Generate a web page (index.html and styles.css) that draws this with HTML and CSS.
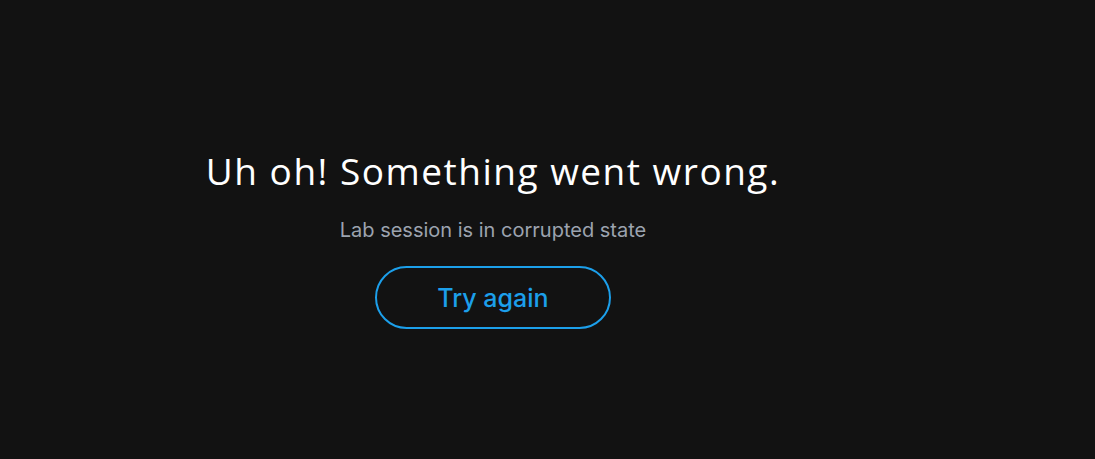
FILE: index.html
```html
<!DOCTYPE html>
<html lang="en">
<head>
<meta charset="utf-8">
<title>Error</title>
<link rel="stylesheet" href="styles.css">
</head>
<body>
<main class="page">
  <section class="error">
    <h1 class="error-title">Uh oh! Something went wrong.</h1>
    <p class="error-message">Lab session is in corrupted state</p>
    <button class="error-button" type="button">Try again</button>
  </section>
</main>
</body>
</html>
```

FILE: styles.css
```css
html, body {
  margin: 0;
  padding: 0;
  background: #121212;
}
.page {
  width: 986px;
  height: 459px;
  display: flex;
  justify-content: center;
  align-items: flex-start;
}
.error {
  display: flex;
  flex-direction: column;
  align-items: center;
  padding-top: 146px;
}
.error-title {
  margin: 0;
  font-family: "Open Sans", sans-serif;
  font-weight: 400;
  font-size: 37px;
  line-height: 50px;
  color: #ffffff;
  letter-spacing: 1.5px;
}
.error-message {
  margin: 21px 0 0;
  font-family: Inter, sans-serif;
  font-size: 20px;
  line-height: 26px;
  color: #9ca3af;
}
.error-button {
  margin-top: 23px;
  width: 236px;
  height: 63px;
  border: 2px solid #1c9fea;
  border-radius: 32px;
  background: transparent;
  color: #1c9fea;
  font-family: Inter, sans-serif;
  font-weight: 500;
  font-size: 25px;
  cursor: pointer;
}
```
